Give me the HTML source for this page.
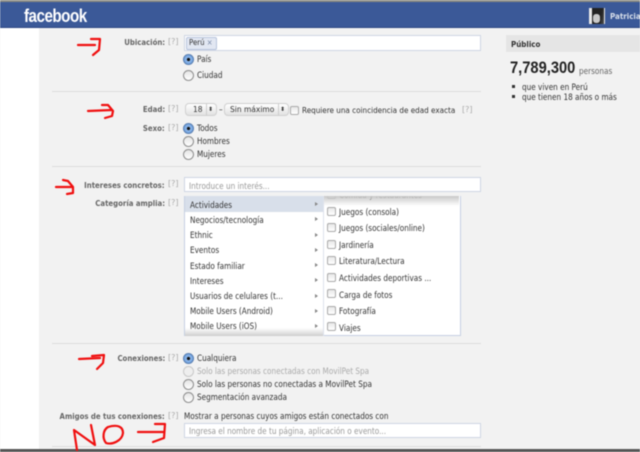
<!DOCTYPE html>
<html><head><meta charset="utf-8">
<style>
html,body{margin:0;padding:0;background:#f2f2f2}
#p{position:relative;width:640px;height:452px;overflow:hidden;background:#f2f2f2;font-family:"DejaVu Sans","Liberation Sans",sans-serif;font-size:8.4px;color:#333;filter:blur(.4px)}
#p div{position:absolute;white-space:nowrap}
.t{line-height:12px;height:12px;transform:scaleX(.87);transform-origin:0 50%}
.l{line-height:12px;height:12px;right:475px;font-weight:bold;color:#666;font-size:8.2px;transform:scaleX(.85);transform-origin:100% 50%}
.q{line-height:12px;height:12px;left:168px;color:#aaa;font-size:8px}
.hr{left:52px;width:429px;height:1px;background:#dcdcdc}
.in{left:184px;width:295px;height:13px;background:#fff;border:1px solid #cfd6e4}
.r{left:183px;width:11px;height:11px;border-radius:50%;background:linear-gradient(#e4e4e4,#fff);border:1px solid #8e8e8e;box-sizing:border-box}
.r.on{background:radial-gradient(circle,#111 0,#111 1.4px,#8fb8ea 1.9px,#5c93d8 100%);border-color:#5a7fb0}
.r.off{border-color:#c8c8c8;background:#eee}
.m{left:190px;line-height:12px;height:12px;color:#333;transform:scaleX(.87);transform-origin:0 50%}
.a{left:315px;width:0;height:0;border-left:3px solid #888;border-top:2.5px solid transparent;border-bottom:2.5px solid transparent}
.c{left:327px;width:7px;height:7px;border:1px solid #aaa;border-radius:2px;background:linear-gradient(#e8e8e8,#fff)}
.s{background:linear-gradient(#fff,#e2e2e2);border:1px solid #d0d0d0;border-radius:4px;height:11px;line-height:11px;box-sizing:content-box;color:#333;font-size:7.5px}
</style></head><body>
<div id="p">
<div style="left:0;top:0;width:39px;height:452px;background:#fff"></div>
<div style="left:0;top:0;width:640px;height:2px;background:#8d8d84"></div>
<div style="left:0;top:2px;width:640px;height:25px;background:#3b5998;border-bottom:1px solid #2c4783"></div>
<div style="left:24px;top:5px;font:bold 18.5px/22px 'Liberation Sans',sans-serif;color:#fff;letter-spacing:-.6px;transform:scaleX(.82);transform-origin:0 50%">facebook</div>
<div style="left:589px;top:8px;width:16px;height:16px;background:#e8e8e8"></div>
<div style="left:592px;top:8px;width:12px;height:16px;background:linear-gradient(100deg,#222 0 70%,#555 100%)"></div>
<div style="left:593px;top:14px;width:7px;height:9px;background:#c8c8c8;border-radius:3px"></div>
<div class="t" style="left:610px;top:10px;font-weight:bold;color:#d8dfea;font-size:8.2px">Patricia</div>

<div class="l" style="top:36px">Ubicación:</div><div class="q" style="top:36px">[?]</div>
<div class="in" style="top:35px;height:14px"></div>
<div style="left:186px;top:37px;width:29px;height:11px;background:#e2e7f2;border:1px solid #b8c4dc;border-radius:2px"></div>
<div class="t" style="left:189px;top:37px;font-size:8px">Perú <span style="color:#7a8aa8">×</span></div>
<div class="r on" style="top:54px"></div><div class="t" style="left:197px;top:53px">País</div>
<div class="r" style="top:70px"></div><div class="t" style="left:197px;top:69px">Ciudad</div>
<div class="hr" style="top:91px"></div>

<div class="l" style="top:103px">Edad:</div><div class="q" style="top:103px">[?]</div>
<div class="s" style="left:185px;top:103px;width:30px;text-indent:7px">18<span style="position:absolute;left:20px;top:0;width:10px;text-indent:1px;border-left:1px solid #ccc;font-size:6px">⬍</span></div>
<div class="t" style="left:219px;top:103px">–</div>
<div class="s" style="left:224px;top:103px;width:63px;text-indent:5px">Sin máximo<span style="position:absolute;left:53px;top:0;width:10px;text-indent:1px;border-left:1px solid #ccc;font-size:6px">⬍</span></div>
<div class="c" style="left:290px;top:106px"></div>
<div class="t" style="left:302px;top:104px;font-size:8.3px">Requiere una coincidencia de edad exacta</div>
<div class="q" style="left:462px;top:104px">[?]</div>
<div class="l" style="top:122px">Sexo:</div><div class="q" style="top:122px">[?]</div>
<div class="r on" style="top:123px"></div><div class="t" style="left:197px;top:122px">Todos</div>
<div class="r" style="top:136px"></div><div class="t" style="left:197px;top:135px">Hombres</div>
<div class="r" style="top:149px"></div><div class="t" style="left:197px;top:148px">Mujeres</div>
<div class="hr" style="top:166px"></div>

<div class="l" style="top:179px">Intereses concretos:</div><div class="q" style="top:178px">[?]</div>
<div class="in" style="top:177px"></div>
<div class="t" style="left:189px;top:180px;color:#999">Introduce un interés...</div>
<div class="l" style="top:197px">Categoría amplia:</div><div class="q" style="top:197px">[?]</div>

<div style="left:184px;top:196px;width:275px;height:139px;background:#fff;border:1px solid #c6d0e2;border-top:none"></div>
<div style="left:185px;top:196px;width:138px;height:16px;background:#d8dfea"></div>
<div style="left:323px;top:196px;width:1px;height:140px;background:#dde2ec"></div>
<div class="m" style="top:199px">Actividades</div><div class="a" style="top:202px"></div>
<div class="m" style="top:214px">Negocios/tecnología</div><div class="a" style="top:217px"></div>
<div class="m" style="top:229px">Ethnic</div><div class="a" style="top:233px"></div>
<div class="m" style="top:244px">Eventos</div><div class="a" style="top:248px"></div>
<div class="m" style="top:260px">Estado familiar</div><div class="a" style="top:263px"></div>
<div class="m" style="top:275px">Intereses</div><div class="a" style="top:278px"></div>
<div class="m" style="top:290px">Usuarios de celulares (t...</div><div class="a" style="top:294px"></div>
<div class="m" style="top:305px">Mobile Users (Android)</div><div class="a" style="top:309px"></div>
<div class="m" style="top:320px">Mobile Users (iOS)</div><div class="a" style="top:324px"></div>
<div style="left:185px;top:328px;width:138px;height:8px;background:linear-gradient(rgba(210,210,210,0),#cfcfcf)"></div>

<div style="left:324px;top:196px;width:135px;height:6px;overflow:hidden">
<div class="t" style="left:15px;top:-7px">Comida y restaurantes</div>
<div class="c" style="left:3px;top:-6px"></div>
</div>
<div style="left:324px;top:196px;width:135px;height:10px;background:linear-gradient(#c8c8c8,rgba(255,255,255,0))"></div>
<div class="c" style="top:207px"></div><div class="t" style="left:339px;top:206px">Juegos (consola)</div>
<div class="c" style="top:223px"></div><div class="t" style="left:339px;top:222px">Juegos (sociales/online)</div>
<div class="c" style="top:240px"></div><div class="t" style="left:339px;top:239px">Jardinería</div>
<div class="c" style="top:256px"></div><div class="t" style="left:339px;top:255px">Literatura/Lectura</div>
<div class="c" style="top:273px"></div><div class="t" style="left:339px;top:272px">Actividades deportivas ...</div>
<div class="c" style="top:289px"></div><div class="t" style="left:339px;top:289px">Carga de fotos</div>
<div class="c" style="top:306px"></div><div class="t" style="left:339px;top:305px">Fotografía</div>
<div class="c" style="top:322px"></div><div class="t" style="left:339px;top:322px">Viajes</div>

<div class="hr" style="top:343px"></div>
<div class="l" style="top:352px">Conexiones:</div><div class="q" style="top:352px">[?]</div>
<div class="r on" style="top:353px"></div><div class="t" style="left:197px;top:352px">Cualquiera</div>
<div class="r off" style="top:366px"></div><div class="t" style="left:197px;top:365px;color:#aaa">Solo las personas conectadas con MovilPet Spa</div>
<div class="r" style="top:379px"></div><div class="t" style="left:197px;top:378px">Solo las personas no conectadas a MovilPet Spa</div>
<div class="r" style="top:392px"></div><div class="t" style="left:197px;top:391px">Segmentación avanzada</div>
<div class="l" style="top:410px">Amigos de tus conexiones:</div><div class="q" style="top:410px">[?]</div>
<div class="t" style="left:184px;top:410px">Mostrar a personas cuyos amigos están conectados con</div>
<div class="in" style="top:423px"></div>
<div class="t" style="left:189px;top:425px;color:#999">Ingresa el nombre de tu página, aplicación o evento...</div>
<div class="hr" style="top:446px"></div>
<div style="left:0;top:449px;width:640px;height:3px;background:#555"></div>

<div style="left:506px;top:35px;width:134px;height:17px;background:#e5e5e5"></div>
<div class="t" style="left:511px;top:38px;font-weight:bold;font-size:8.2px">Público</div>
<div style="left:510px;top:58px;font:bold 16.5px/20px 'Liberation Sans',sans-serif;color:#222;transform:scaleX(.89);transform-origin:0 50%">7,789,300</div>
<div class="t" style="left:579px;top:65px;color:#666">personas</div>
<div style="left:512px;top:85px;width:3px;height:3px;background:#333"></div>
<div class="t" style="left:522px;top:81px">que viven en Perú</div>
<div style="left:512px;top:95px;width:3px;height:3px;background:#333"></div>
<div class="t" style="left:522px;top:91px">que tienen 18 años o más</div>

<svg style="position:absolute;left:0;top:0" width="640" height="452" fill="none" stroke="#f01010" stroke-width="2.2" stroke-linecap="round" stroke-linejoin="round">
<path d="M78 45H95M91 39H100L99 50L93 55"/>
<path d="M88 111L112 110M102 105H108L113 111L112 116L105 118"/>
<path d="M56 187H73M63 180L68 181L73 187L73 193L67 194"/>
<path d="M79 359L100 358M92 356L104 355L103 363L97 369"/>
<path d="M77 450L74 430L95 445L91 425"/>
<path d="M108 427C118 424 123 427 123 433C122 441 112 445 106 443C102 438 103 430 108 427Z"/>
<path d="M138 432H163M155 424H165L164 438L153 442"/>
</svg>
</div>
</body></html>
